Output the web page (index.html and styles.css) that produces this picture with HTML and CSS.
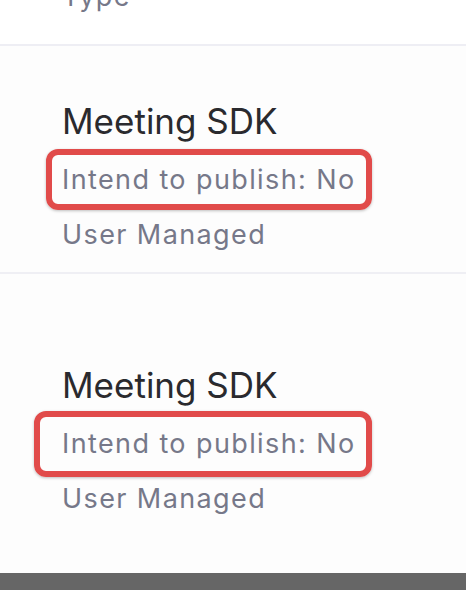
FILE: index.html
```html
<!DOCTYPE html>
<html lang="en">
<head>
<meta charset="utf-8">
<title>Apps</title>
<link rel="stylesheet" href="styles.css">
</head>
<body>
<div class="page">
  <div class="head">
    <div class="type">Type</div>
  </div>
  <div class="item item-first">
    <div class="title">Meeting SDK</div>
    <div class="meta hl hl-a">Intend to publish: No</div>
    <div class="meta">User Managed</div>
  </div>
  <div class="item item-second">
    <div class="title">Meeting SDK</div>
    <div class="meta hl hl-b">Intend to publish: No</div>
    <div class="meta">User Managed</div>
  </div>
  <div class="footer"></div>
</div>
</body>
</html>
```

FILE: styles.css
```css
html, body {
  margin: 0;
  padding: 0;
  background: #ffffff;
}

.page {
  width: 466px;
  height: 590px;
  overflow: hidden;
  display: flex;
  flex-direction: column;
  font-family: Inter, "Noto Sans", sans-serif;
}

.head {
  height: 44px;
  border-bottom: 2px solid #eeeef4;
  background: #ffffff;
  padding-left: 62px;
  overflow: hidden;
}

.type {
  font-size: 27px;
  line-height: 30px;
  letter-spacing: 1.4px;
  color: #767889;
  margin-top: -18px;
}

.item {
  background: #fdfdfd;
  padding-left: 62px;
}

.item-first {
  height: 228px;
  padding-top: 47px;
  box-sizing: border-box;
  border-bottom: 2px solid #efeff4;
}

.item-second {
  flex: 1;
  padding-top: 83px;
  box-sizing: border-box;
}

.title {
  font-size: 35px;
  line-height: 56px;
  color: #2a2a2e;
  margin-bottom: 3px;
}

.meta {
  font-size: 27px;
  line-height: 55px;
  letter-spacing: 1.4px;
  color: #767889;
}

.hl {
  width: fit-content;
  border: 6px solid #e14b4a;
  border-radius: 12px;
  box-shadow: 0 1px 3px rgba(0, 0, 0, 0.25);
}

.hl-a {
  line-height: 49px;
  margin: -3px 0 -3px -16px;
  padding: 0 10px 0 10px;
}

.hl-b {
  line-height: 54px;
  margin: -5.5px 0 -5.5px -28px;
  padding: 0 10px 0 22px;
}

.footer {
  height: 17px;
  background: #666666;
}
```
